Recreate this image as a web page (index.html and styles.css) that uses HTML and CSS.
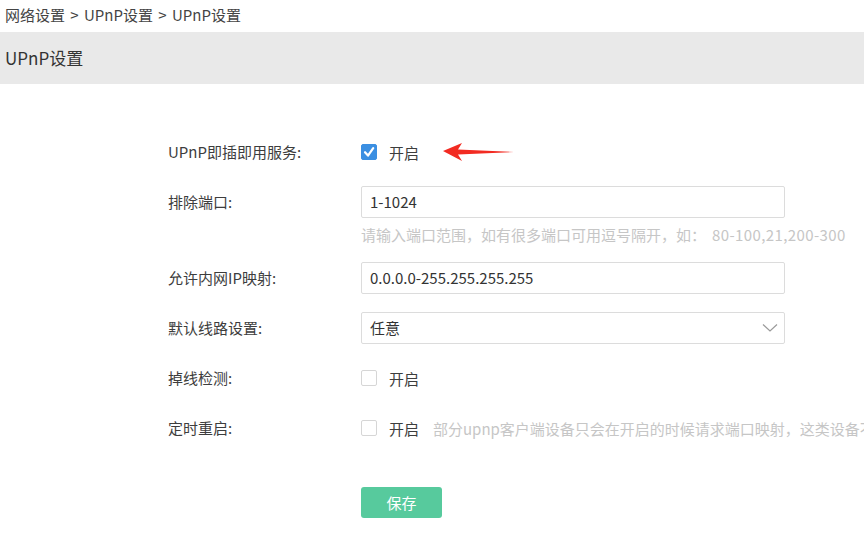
FILE: index.html
```html
<!DOCTYPE html>
<html lang="zh-CN">
<head>
<meta charset="utf-8">
<title>UPnP设置</title>
<link rel="stylesheet" href="styles.css">
</head>
<body>
<div class="crumb">网络设置 &gt; UPnP设置 &gt; UPnP设置</div>
<div class="titlebar">UPnP设置</div>
<form class="form">
  <div class="row">
    <div class="label">UPnP即插即用服务:</div>
    <div class="ctrl">
      <span class="cb checked"><svg width="16" height="16" viewBox="0 0 16 16"><path d="M4 8.2 L7 11.6 L12.2 4.2" fill="none" stroke="#fff" stroke-width="2.2" stroke-linecap="round" stroke-linejoin="round"/></svg></span>
      <span class="cbtext">开启</span>
      <svg class="arrow" width="72" height="22" viewBox="0 0 72 22"><polygon points="0,10 19,2 15,8.5 71,11 15,13.5 19,20" fill="#f22b22"/></svg>
    </div>
  </div>
  <div class="row row-hint">
    <div class="label">排除端口:</div>
    <div class="ctrl col">
      <div class="input">1-1024</div>
      <div class="hint">请输入端口范围，如有很多端口可用逗号隔开，如：<span class="eg">80-100,21,200-300</span></div>
    </div>
  </div>
  <div class="row">
    <div class="label">允许内网IP映射:</div>
    <div class="ctrl"><div class="input">0.0.0.0-255.255.255.255</div></div>
  </div>
  <div class="row">
    <div class="label">默认线路设置:</div>
    <div class="ctrl"><div class="input select">任意<svg class="chev" width="16" height="10" viewBox="0 0 16 10"><path d="M1 1.5 L8 8 L15 1.5" fill="none" stroke="#9a9a9a" stroke-width="1.2"/></svg></div></div>
  </div>
  <div class="row">
    <div class="label">掉线检测:</div>
    <div class="ctrl"><span class="cb"></span><span class="cbtext">开启</span></div>
  </div>
  <div class="row row-last">
    <div class="label">定时重启:</div>
    <div class="ctrl"><span class="cb"></span><span class="cbtext">开启</span><span class="note">部分upnp客户端设备只会在开启的时候请求端口映射，这类设备不</span></div>
  </div>
  <div class="row">
    <div class="label"></div>
    <div class="ctrl"><button type="button" class="btn">保存</button></div>
  </div>
</form>
</body>
</html>
```
FILE: styles.css
```css
html, body {
  margin: 0;
  padding: 0;
  overflow: hidden;
  background: #fff;
}
body {
  font-family: "Noto Sans CJK SC", "Noto Sans", sans-serif;
  font-size: 15px;
  color: #333;
  width: 864px;
  height: 539px;
}
.crumb {
  height: 32px;
  line-height: 30px;
  padding-left: 5px;
  color: #444;
  font-size: 15px;
  word-spacing: 2px;
}
.titlebar {
  height: 52px;
  line-height: 52px;
  background: #e9e9e9;
  padding-left: 5px;
  font-size: 17px;
  color: #333;
}
.form {
  padding-top: 52px;
  padding-left: 168px;
}
.row {
  display: flex;
  align-items: flex-start;
  margin-bottom: 18px;
}
.row-hint { margin-bottom: 16px; }
.row-last { margin-bottom: 42px; }
.label {
  width: 193px;
  flex: none;
  height: 32px;
  line-height: 32px;
  color: #3d3d3d;
  white-space: nowrap;
}
.ctrl {
  display: flex;
  align-items: center;
  height: 32px;
  white-space: nowrap;
}
.ctrl.col {
  flex-direction: column;
  align-items: flex-start;
  height: auto;
}
.cb {
  width: 16px;
  height: 16px;
  box-sizing: border-box;
  border: 1px solid #d6d6d6;
  border-radius: 2px;
  background: #fff;
  flex: none;
  display: block;
}
.cb.checked {
  background: #3b8fe2;
  border-color: #3b8fe2;
}
.cb.checked svg { display: block; margin: -1px; }
.cbtext {
  margin-left: 12px;
  color: #3d3d3d;
}
.arrow {
  margin-left: 24px;
  display: block;
}
.input {
  width: 424px;
  height: 32px;
  box-sizing: border-box;
  border: 1px solid #dcdcdc;
  border-radius: 2px;
  padding-left: 8px;
  line-height: 30px;
  color: #333;
  display: flex;
  align-items: center;
}
.select {
  justify-content: space-between;
  padding-right: 6px;
}
.chev { display: block; }
.hint {
  margin-top: 6px;
  line-height: 22px;
  color: #c6c6c6;
}
.eg { margin-left: 6px; letter-spacing: 0.4px; }
.note {
  margin-left: 14px;
  color: #c6c6c6;
}
.btn {
  width: 81px;
  height: 31px;
  border: none;
  border-radius: 3px;
  background: #57ca9d;
  color: #fff;
  font-family: inherit;
  font-size: 15px;
  padding: 0;
  cursor: pointer;
}
```
